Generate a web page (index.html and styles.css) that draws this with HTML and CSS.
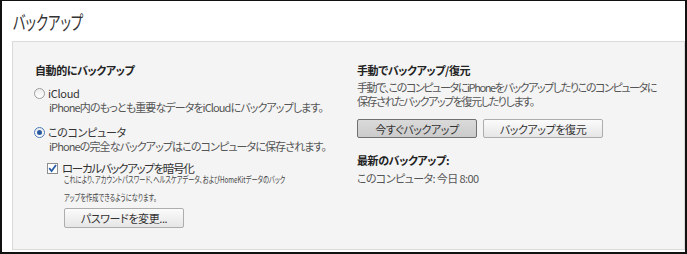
FILE: index.html
```html
<!DOCTYPE html>
<html lang="ja">
<head>
    <meta charset="UTF-8">
    <title>バックアップ</title>
    <link rel="stylesheet" href="styles.css">
</head>
<body>
    <div class="frame">
        <h1 class="title"><span>バックアップ</span></h1>
        <div class="panel">
            <div class="col">
                <h2>自動的にバックアップ</h2>
                <div class="radio first"><span class="dot"></span>iCloud</div>
                <p class="desc">iPhone内のもっとも重要なデータをiCloudにバックアップします。</p>
                <div class="radio"><span class="dot on"></span>このコンピュータ</div>
                <p class="desc">iPhoneの完全なバックアップはこのコンピュータに保存されます。</p>
                <div class="check">
                    <span class="box">
                        <svg width="9" height="9" viewBox="0 0 9 9"><path d="M1.2 4.2 L3.6 7 L8 1" fill="none" stroke="#2b5da6" stroke-width="1.8"/></svg>
                    </span>
                    ローカルバックアップを暗号化
                </div>
                <p class="small"><span>これにより、アカウントパスワード、ヘルスケアデータ、およびHomeKitデータのバック<br>アップを作成できるようになります。</span></p>
                <button class="btn pw">パスワードを変更...</button>
            </div>
            <div class="col">
                <h2 class="rh">手動でバックアップ/復元</h2>
                <p class="desc r">手動で、このコンピュータにiPhoneをバックアップしたりこのコンピュータに<br>保存されたバックアップを復元したりします。</p>
                <div class="btns">
                    <button class="btn def">今すぐバックアップ</button>
                    <button class="btn">バックアップを復元</button>
                </div>
                <h2 class="latest">最新のバックアップ:</h2>
                <p class="desc r last">このコンピュータ: 今日 8:00</p>
            </div>
        </div>
    </div>
</body>
</html>
```
FILE: styles.css
```css
body {
    margin: 0;
    font-family: "Noto Sans CJK JP", "Noto Sans", sans-serif;
    font-feature-settings: "palt";
    background: #fff;
}
.frame {
    box-sizing: border-box;
    width: 687px;
    height: 254px;
    border: 2px solid #111;
    border-top-width: 1px;
    padding: 0 0 2px 10px;
    display: flex;
    flex-direction: column;
}
.title {
    margin: 9px 0 7px 1px;
    height: 24px;
    font-size: 19px;
    line-height: 24px;
    font-weight: normal;
    color: #333;
}
.title span {
    display: inline-block;
    transform: scaleX(0.7);
    transform-origin: left;
}
.panel {
    flex: 1;
    background: #f4f4f4;
    border: 1px solid #dadada;
    padding: 20px 0 0 22px;
    display: grid;
    grid-template-columns: 322px 1fr;
    align-items: start;
}
h2 {
    margin: 0;
    font-size: 11px;
    font-weight: bold;
    color: #222;
    line-height: 16px;
    letter-spacing: -0.4px;
}
.radio {
    display: flex;
    align-items: center;
    margin: 11px 0 0 -1px;
    font-size: 11px;
    line-height: 14px;
    color: #333;
    letter-spacing: -0.3px;
}
.radio.first {
    margin-top: 8px;
}
.dot {
    box-sizing: border-box;
    width: 11px;
    height: 11px;
    border: 1px solid #9c9c9c;
    border-radius: 50%;
    background: linear-gradient(#ececec, #fff);
    margin-right: 3px;
    display: flex;
    align-items: center;
    justify-content: center;
}
.dot.on {
    border-color: #4a78b8;
}
.dot.on::after {
    content: "";
    width: 5px;
    height: 5px;
    border-radius: 50%;
    background: #2a5aa0;
}
.desc {
    margin: 0 0 0 14px;
    font-size: 11px;
    line-height: 14px;
    color: #555;
    letter-spacing: -0.9px;
    white-space: nowrap;
}
.desc.r {
    margin: 2px 0 0 0;
    letter-spacing: -1.4px;
}
.desc.last {
    margin-top: 3px;
    letter-spacing: -0.6px;
}
.check {
    display: flex;
    align-items: center;
    margin: 8px 0 0 12px;
    font-size: 11.5px;
    line-height: 14px;
    color: #333;
    letter-spacing: -1.3px;
}
.box {
    box-sizing: border-box;
    width: 11px;
    height: 11px;
    border: 1px solid #8e8e8e;
    background: #fff;
    margin-right: 4px;
    display: flex;
    align-items: center;
    justify-content: center;
}
.small {
    margin: -4px 0 0 29px;
    font-size: 9px;
    line-height: 18px;
    color: #444;
    white-space: nowrap;
}
.small span {
    display: inline-block;
    transform: scaleX(0.69);
    transform-origin: left;
}
.btn {
    font-family: inherit;
    font-feature-settings: "palt";
    font-size: 11px;
    letter-spacing: -0.4px;
    color: #333;
    height: 19px;
    padding: 0;
    border: 1px solid #adadad;
    border-radius: 2px;
    background: linear-gradient(#fbfbfb, #e6e6e6);
}
.pw {
    display: block;
    margin: 1px 0 0 29px;
    width: 120px;
    height: 20px;
}
.btns {
    display: flex;
    gap: 6px;
    margin-top: 11px;
}
.btns .btn {
    width: 120px;
}
.btn.def {
    border-color: #707070;
    background: linear-gradient(#dadada, #cbcbcb);
}
.latest {
    margin-top: 14px;
}
```
